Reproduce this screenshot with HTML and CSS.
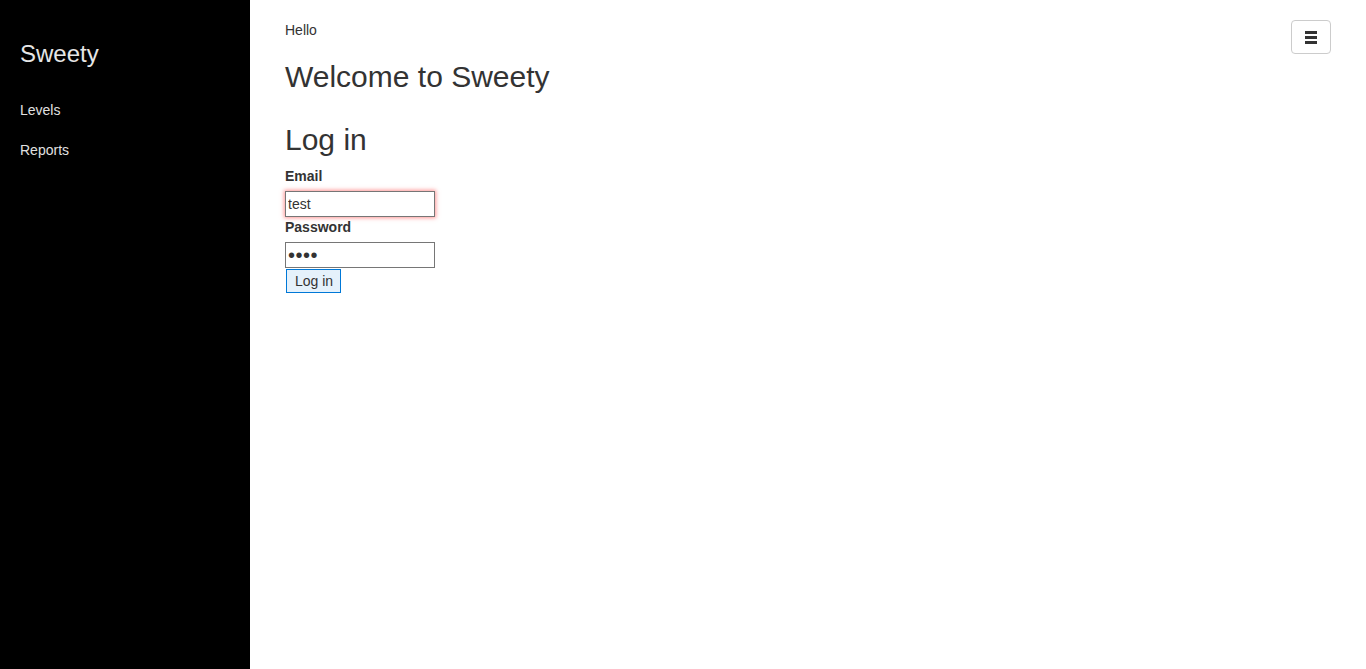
FILE: index.html
```html
<!DOCTYPE html>
<html>
<head>
<meta charset="utf-8">
<title>Sweety</title>
<link rel="stylesheet" href="styles.css">
</head>
<body>
<div class="layout">
  <aside class="sidebar">
    <div class="brand">Sweety</div>
    <nav class="nav">
      <a href="#">Levels</a>
      <a href="#">Reports</a>
    </nav>
  </aside>
  <main class="main">
    <button class="toggle" type="button" aria-label="menu">
      <span class="bar"></span><span class="bar"></span><span class="bar"></span>
    </button>
    <p class="hello">Hello</p>
    <h1 class="title">Welcome to Sweety</h1>
    <h2 class="subtitle">Log in</h2>
    <form class="form">
      <label class="label" for="email">Email</label>
      <input class="input input-invalid" id="email" type="text" value="test">
      <label class="label" for="pw">Password</label>
      <input class="input input-password" id="pw" type="password" value="test">
      <button class="submit" type="button">Log in</button>
    </form>
  </main>
</div>
</body>
</html>
```

FILE: styles.css
```css
html, body {
  margin: 0;
  padding: 0;
  height: 100%;
}
body {
  font-family: "Liberation Sans", Arial, sans-serif;
  font-size: 14px;
  line-height: 20px;
  color: #333;
  background: #fff;
}
.layout {
  display: flex;
  min-height: 100%;
}
.sidebar {
  width: 250px;
  flex: 0 0 250px;
  background: #000;
  padding: 0 20px;
  box-sizing: border-box;
}
.brand {
  font-size: 24px;
  line-height: 30px;
  color: #e6e6e6;
  margin-top: 39px;
}
.nav {
  display: flex;
  flex-direction: column;
  margin-top: 31px;
  gap: 20px;
}
.nav a {
  color: #e0e0e0;
  text-decoration: none;
  line-height: 20px;
}
.main {
  flex: 1;
  position: relative;
  padding: 20px 35px;
}
.toggle {
  position: absolute;
  top: 20px;
  right: 35px;
  width: 40px;
  height: 34px;
  box-sizing: border-box;
  border: 1px solid #ccc;
  border-radius: 4px;
  background: #fff;
  display: flex;
  flex-direction: column;
  align-items: center;
  justify-content: center;
  gap: 2px;
  padding: 0;
}
.bar {
  display: block;
  width: 12px;
  height: 3px;
  background: #333;
}
.hello {
  margin: 0;
}
.title {
  font-size: 30px;
  font-weight: 500;
  line-height: 33px;
  margin: 20px 0 30px;
}
.subtitle {
  font-size: 30px;
  font-weight: 500;
  line-height: 33px;
  margin: 0 0 10px;
}
.form {
  display: flex;
  flex-direction: column;
  align-items: flex-start;
}
.label {
  font-weight: bold;
  margin-bottom: 5px;
}
.input {
  width: 150px;
  height: 26px;
  box-sizing: border-box;
  border: 1px solid #767676;
  padding: 1px 2px;
  font-family: "Liberation Sans", Arial, sans-serif;
  font-size: 14px;
  color: #333;
  margin: 0;
}
.input-password {
  font-size: 20px;
  letter-spacing: 0.5px;
  padding: 0 2px;
}
.input-invalid {
  box-shadow: 0 0 4px 1px rgba(255, 80, 80, 0.6);
}
.submit {
  margin: 1px 0 0 1px;
  height: 24px;
  padding: 1px 7px 1px 8px;
  border: 1px solid #0078d7;
  background: #e5f1fb;
  font-family: "Liberation Sans", Arial, sans-serif;
  font-size: 14px;
  color: #333;
}
```
